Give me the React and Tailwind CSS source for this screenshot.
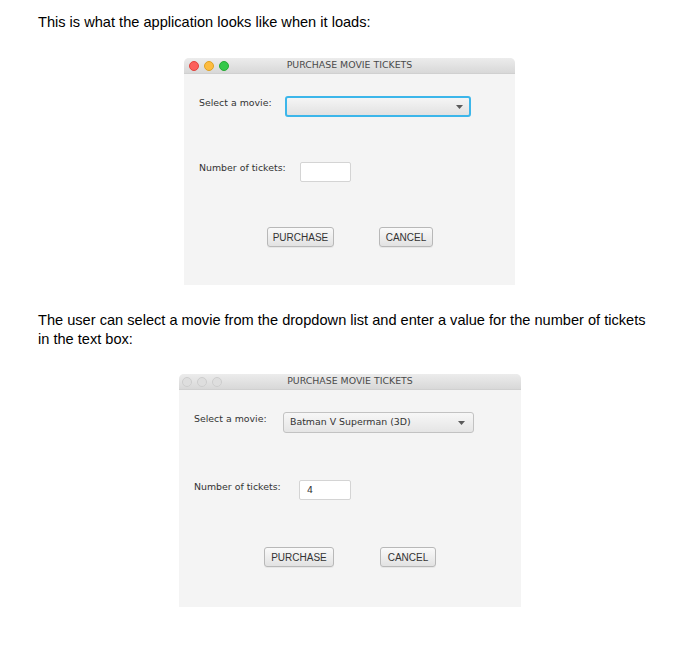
import React from "react";

const uiFont = { fontFamily: '"DejaVu Sans", "Open Sans", sans-serif' };

function TrafficLights({ active }) {
  if (active) {
    return (
      <div className="flex items-center gap-[5px]">
        <span className="w-[10px] h-[10px] rounded-full bg-[#fc605c] border border-[#e0443e]" />
        <span className="w-[10px] h-[10px] rounded-full bg-[#fdbc40] border border-[#dea123]" />
        <span className="w-[10px] h-[10px] rounded-full bg-[#34c84a] border border-[#27aa35]" />
      </div>
    );
  }
  return (
    <div className="flex items-center gap-[5px]">
      <span className="w-[10px] h-[10px] rounded-full bg-[#dedede] border border-[#cdcdcd]" />
      <span className="w-[10px] h-[10px] rounded-full bg-[#dedede] border border-[#cdcdcd]" />
      <span className="w-[10px] h-[10px] rounded-full bg-[#dedede] border border-[#cdcdcd]" />
    </div>
  );
}

function Arrow() {
  return (
    <svg width="7" height="4" viewBox="0 0 7 4">
      <path d="M0 0 L7 0 L3.5 4 Z" fill="#5a5a5a" />
    </svg>
  );
}

function Button({ children, className }) {
  return (
    <div
      className={`h-[20px] flex items-center justify-center rounded-[3px] border border-[#b8b8b8] bg-gradient-to-b from-[#fafafa] to-[#e2e2e2] text-[10px] text-[#333] shadow-[0_1px_0_rgba(0,0,0,0.05)] ${className}`}
      style={{ fontFamily: '"Liberation Sans", Arial, sans-serif' }}
    >
      {children}
    </div>
  );
}

function MovieWindow({ active, movie, tickets, v }) {
  return (
    <div
      className={`${v.box} bg-[#f4f4f4] rounded-t-[5px] overflow-hidden`}
      style={uiFont}
    >
      <div className="h-[16px] relative flex items-center justify-center bg-gradient-to-b from-[#ececec] to-[#d8d8d8] border-b border-[#d0d0d0]">
        <div className={`absolute top-[3px] ${v.lights}`}>
          <TrafficLights active={active} />
        </div>
        <span className="text-[9.4px] text-[#4a4a4a]">PURCHASE MOVIE TICKETS</span>
      </div>

      <div className={`flex items-start ${v.row1}`}>
        <span className="text-[9.4px] leading-[12px] pt-[1px] text-[#333]">Select a movie:</span>
        {active ? (
          <div className={`${v.combo} h-[21px] rounded-[3px] border-2 border-[#3cb6ea] bg-gradient-to-b from-[#f5f5f5] to-[#e2e2e2] flex items-center justify-end pr-[6px]`}>
            <Arrow />
          </div>
        ) : (
          <div className={`${v.combo} h-[21px] rounded-[3px] border border-[#c2c2c2] bg-gradient-to-b from-[#f7f7f7] to-[#e5e5e5] flex items-center justify-between pl-[6px] pr-[8px]`}>
            <span className="text-[9.4px] text-[#333]">{movie}</span>
            <Arrow />
          </div>
        )}
      </div>

      <div className={`flex items-start ${v.row2}`}>
        <span className={`text-[9.4px] leading-[12px] ${v.label2} text-[#333]`}>Number of tickets:</span>
        <div className={`${v.field} h-[20px] bg-white border border-[#d4d4d4] rounded-[2px] flex items-center pl-[7px]`}>
          <span className="text-[9.4px] text-[#333]">{tickets}</span>
        </div>
      </div>

      <div className={`flex ${v.row3}`}>
        <Button className={v.buy}>PURCHASE</Button>
        <Button className={v.cancel}>CANCEL</Button>
      </div>
    </div>
  );
}

const first = {
  box: "ml-[184px] w-[331px] h-[227px]",
  lights: "left-[5px]",
  row1: "mt-[22px] pl-[15px]",
  combo: "ml-auto mr-[44px] w-[186px]",
  row2: "mt-[45px] pl-[15px]",
  label2: "pt-0",
  field: "ml-auto mr-[164px] w-[51px]",
  row3: "mt-[45px] pl-[83px]",
  buy: "w-[67px]",
  cancel: "ml-[45px] w-[54px]",
};

const second = {
  box: "ml-[179px] w-[342px] h-[233px]",
  lights: "left-[3px]",
  row1: "mt-[22px] pl-[15px]",
  combo: "ml-auto mr-[47px] w-[191px]",
  row2: "mt-[47px] pl-[15px]",
  label2: "pt-[1px]",
  field: "ml-auto mr-[170px] w-[52px]",
  row3: "mt-[47px] pl-[85px]",
  buy: "w-[70px]",
  cancel: "ml-[46px] w-[56px]",
};

export default function App() {
  return (
    <div className="w-[696px] h-[646px] bg-white text-black" style={{ fontFamily: '"Liberation Sans", Arial, sans-serif' }}>
      <p className="pt-[13px] pl-[38px] text-[14.6px] leading-[19px]">
        This is what the application looks like when it loads:
      </p>
      <div className="mt-[26px]">
        <MovieWindow active v={first} tickets="" />
      </div>
      <p className="mt-[26px] pl-[38px] pr-[45px] text-[14.6px] leading-[19px]">
        The user can select a movie from the dropdown list and enter a value for the number of tickets in the text box:
      </p>
      <div className="mt-[25px]">
        <MovieWindow v={second} movie="Batman V Superman (3D)" tickets="4" />
      </div>
    </div>
  );
}
